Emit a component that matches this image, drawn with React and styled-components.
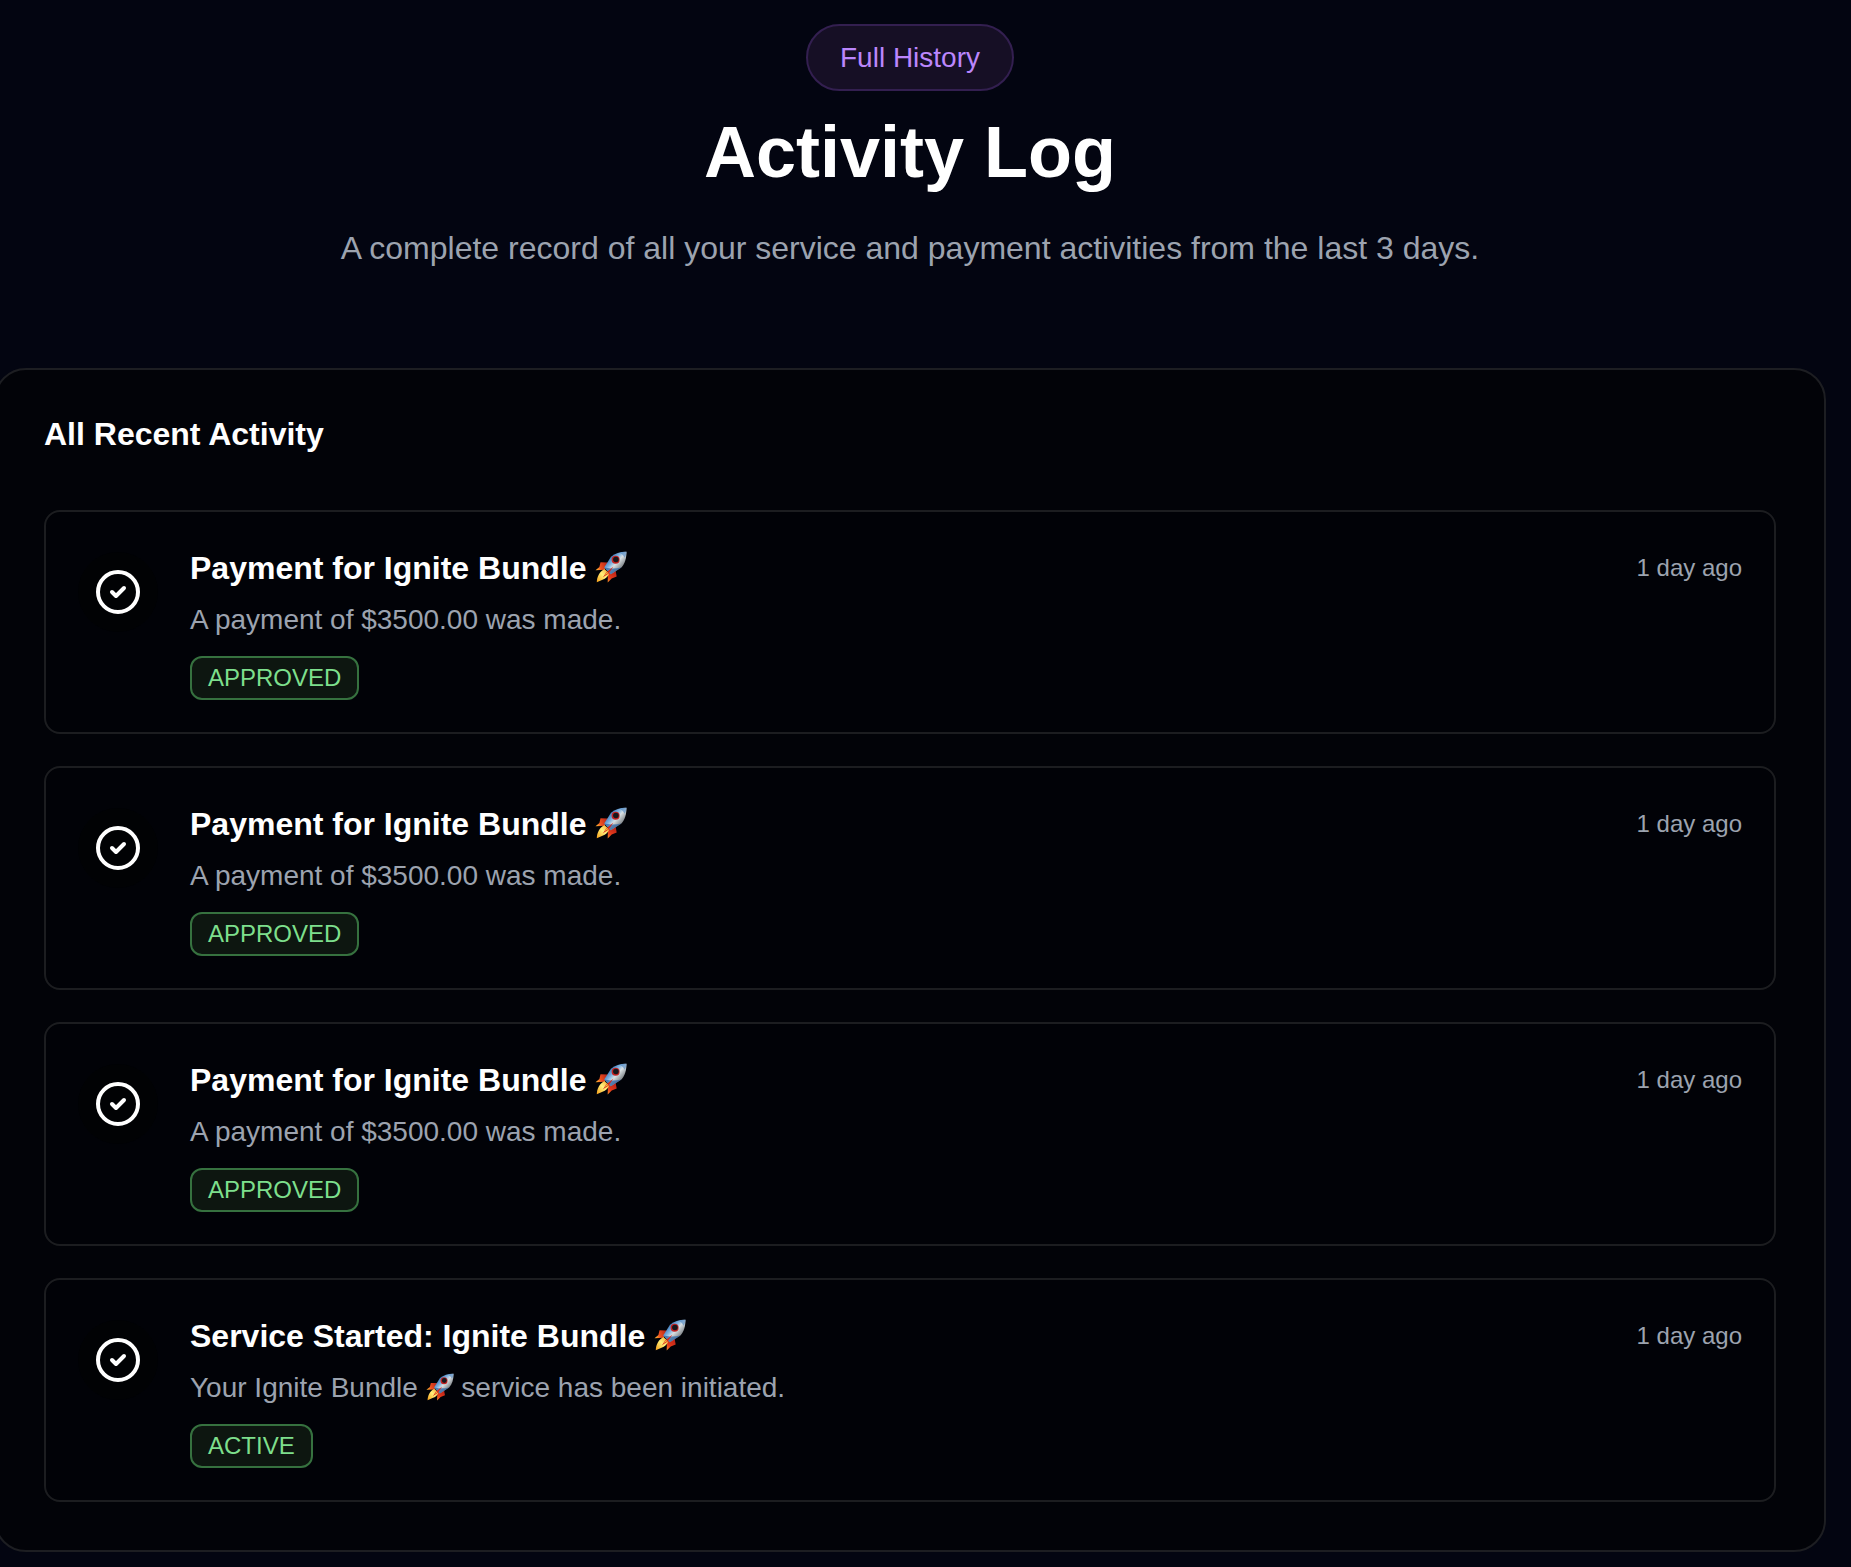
import React from "react";
import styled, { createGlobalStyle } from "styled-components";
import { CircleCheck } from "lucide-react";

const GlobalStyle = createGlobalStyle`
  *, *::before, *::after { box-sizing: border-box; }
  body {
    margin: 0;
    background: #030511;
    color: #ffffff;
    font-family: "Liberation Sans", Arial, sans-serif;
    overflow-x: hidden;
  }
  h1, h2, h3, p, ul { margin: 0; padding: 0; }
`;

const Page = styled.main`
  margin: 0 25px 0 -6px;
  padding: 24px 0 15px;
`;

const Header = styled.header`
  display: flex;
  flex-direction: column;
  align-items: center;
  text-align: center;
  margin-bottom: 92px;
`;

const Pill = styled.span`
  padding: 10px 32px;
  border: 2px solid #331f50;
  border-radius: 34px;
  background: #160f25;
  color: #bb86fc;
  font-size: 28px;
  line-height: 43px;
`;

const PageTitle = styled.h1`
  margin-top: 25px;
  font-size: 72px;
  line-height: 72px;
  font-weight: 700;
`;

const Lead = styled.p`
  margin-top: 32px;
  color: #9ca3af;
  font-size: 32px;
  line-height: 56px;
`;

const Card = styled.section`
  padding: 48px;
  border: 2px solid #1d1e22;
  border-radius: 32px;
  background: #020308;
`;

const CardTitle = styled.h2`
  margin-bottom: 60px;
  font-size: 32px;
  line-height: 32px;
  font-weight: 700;
`;

const List = styled.ul`
  display: flex;
  flex-direction: column;
  gap: 32px;
  list-style: none;
`;

const Row = styled.li`
  display: flex;
  align-items: flex-start;
  gap: 32px;
  padding: 32px;
  border: 2px solid #1c1d20;
  border-radius: 16px;
  background: #010207;
`;

const IconDisc = styled.span`
  display: flex;
  flex: none;
  margin-top: 8px;
  padding: 16px;
  border-radius: 50%;
  background: #010204;
`;

const Body = styled.div`
  flex: 1;
  min-width: 0;
`;

const RowTitle = styled.h3`
  font-size: 32px;
  line-height: 48px;
  font-weight: 700;
`;

const RowText = styled.p`
  margin: 8px 0 16px;
  color: #9ca3af;
  font-size: 28px;
  line-height: 40px;
`;

const Badge = styled.span`
  display: block;
  width: fit-content;
  padding: 4px 16px;
  border: 2px solid #36713f;
  border-radius: 12px;
  background: #0d1610;
  color: #7ddf8c;
  font-size: 24px;
  line-height: 32px;
`;

const Time = styled.time`
  flex: none;
  color: #9ca3af;
  font-size: 24px;
  line-height: 48px;
`;

const RocketSvg = styled.svg`
  display: inline-block;
  width: 1em;
  height: 1em;
  vertical-align: -0.125em;
`;

function Rocket() {
  return (
    <RocketSvg viewBox="0 0 32 32" role="img" aria-label="rocket">
      <defs>
        <linearGradient id="hull" x1="13" y1="8" x2="24" y2="18" gradientUnits="userSpaceOnUse">
          <stop offset="0" stopColor="#3a78b8" />
          <stop offset="0.35" stopColor="#7fb2e0" />
          <stop offset="0.6" stopColor="#d9e0e4" />
          <stop offset="1" stopColor="#8d9296" />
        </linearGradient>
        <linearGradient id="fin" x1="1" y1="17" x2="12" y2="12" gradientUnits="userSpaceOnUse">
          <stop offset="0" stopColor="#ffb02e" />
          <stop offset="0.35" stopColor="#ee5220" />
          <stop offset="1" stopColor="#b92318" />
        </linearGradient>
        <linearGradient id="fin2" x1="13" y1="31" x2="21" y2="20" gradientUnits="userSpaceOnUse">
          <stop offset="0" stopColor="#f78b24" />
          <stop offset="0.35" stopColor="#e23a1b" />
          <stop offset="1" stopColor="#b61f17" />
        </linearGradient>
        <linearGradient id="flame" x1="2" y1="30" x2="14" y2="18" gradientUnits="userSpaceOnUse">
          <stop offset="0" stopColor="#f7a51f" />
          <stop offset="0.5" stopColor="#fff07a" />
          <stop offset="1" stopColor="#f4a02c" />
        </linearGradient>
      </defs>
      <path fill="url(#fin)" d="M13 11.500 5.500 11.300 4.400 16 .5 19.200l9.100-.4z" />
      <path fill="url(#fin2)" d="m20.500 19 1.200 6.500-5 2-4 4 .2-9z" />
      <path fill="url(#hull)" d="M31.500.800C25.500.700 20 2.200 16 5.800L9.200 16.500l6.600 6.800 10.600-6.800C30 12.800 31.500 7 31.500.800z" />
      <path fill="#4b84bf" d="M31.500.800c-2.700 0-5.100.300-7.100 1 2 .8 4.100 2.400 5.200 4.900 1-1.600 1.900-3.700 1.900-5.900z" opacity=".6" />
      <path fill="#2f66a5" d="m9.200 16.500 6.600 6.800 10.600-6.800c-4.500 1-8.500 1.200-12 .8z" opacity=".75" />
      <circle cx="20.600" cy="8.800" r="4" fill="#c42222" />
      <circle cx="20.900" cy="8.500" r="2.800" fill="#16161c" />
      <path fill="url(#flame)" d="M9.400 18 14.200 22.500c-1 3-3.400 5-6.700 6.200L1.800 31.200c.2-5.200 2.400-10.200 7.600-13.200z" />
      <path fill="#d8261b" d="M18.500 15.500 11 21.800l-3.200 4.800 5.800-4z" />
      <path fill="#ffc83d" d="m12.200 21-2.600 3.300 3.600-2.400z" />
    </RocketSvg>
  );
}

const payment = {
  title: ["Payment for Ignite Bundle "],
  text: ["A payment of $3500.00 was made."],
  status: "APPROVED",
  time: "1 day ago",
};

const activities = [
  payment,
  payment,
  payment,
  {
    title: ["Service Started: Ignite Bundle "],
    text: ["Your Ignite Bundle ", " service has been initiated."],
    status: "ACTIVE",
    time: "1 day ago",
  },
];

function Activity({ title, text, status, time }) {
  return (
    <Row>
      <IconDisc>
        <CircleCheck size={48} strokeWidth={2} aria-hidden="true" />
      </IconDisc>
      <Body>
        <RowTitle>
          {title[0]}
          <Rocket />
        </RowTitle>
        <RowText>
          {text[0]}
          {text.length > 1 && <Rocket />}
          {text[1]}
        </RowText>
        <Badge>{status}</Badge>
      </Body>
      <Time>{time}</Time>
    </Row>
  );
}

export default function App() {
  return (
    <>
      <GlobalStyle />
      <Page>
        <Header>
          <Pill>Full History</Pill>
          <PageTitle>Activity Log</PageTitle>
          <Lead>A complete record of all your service and payment activities from the last 3 days.</Lead>
        </Header>
        <Card>
          <CardTitle>All Recent Activity</CardTitle>
          <List>
            {activities.map((item, i) => (
              <Activity key={i} {...item} />
            ))}
          </List>
        </Card>
      </Page>
    </>
  );
}
